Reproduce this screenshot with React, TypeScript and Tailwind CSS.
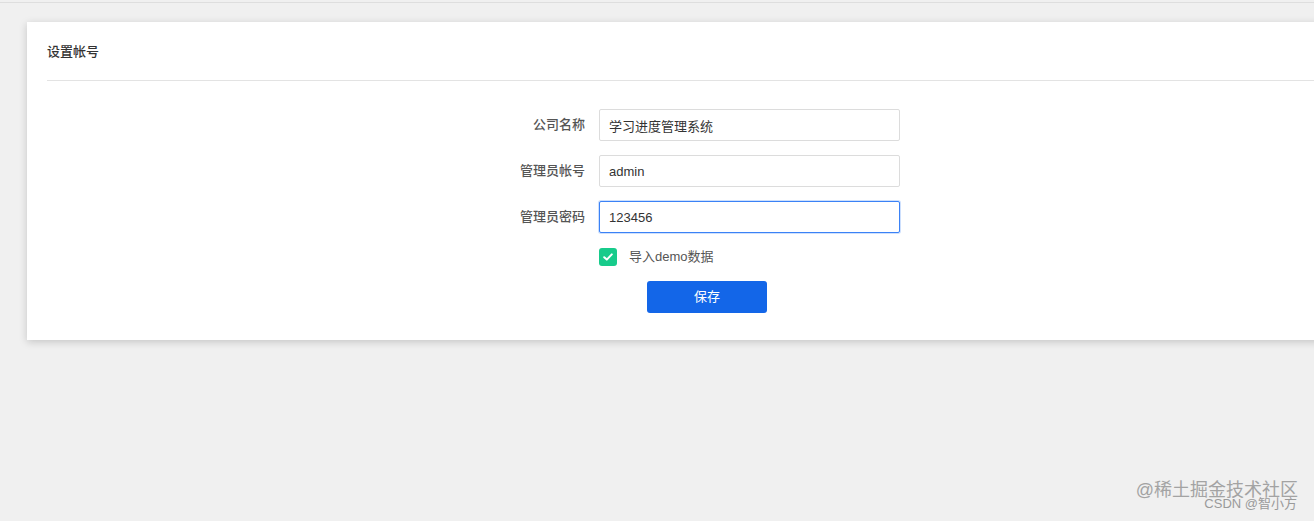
import { useState } from "react";

const font = { fontFamily: '"Liberation Sans", "Noto Sans CJK SC", sans-serif' };

function Field({
  label,
  value,
  focused,
  onChange,
}: {
  label: string;
  value: string;
  focused?: boolean;
  onChange: (v: string) => void;
}) {
  return (
    <div className="flex items-center">
      <label className="w-[552px] pr-[14px] text-right text-[13px] font-medium text-[#555]">{label}</label>
      <input
        value={value}
        onChange={(e) => onChange(e.target.value)}
        className={`h-[32px] w-[301px] rounded-[2px] border bg-white px-[9px] text-[13px] text-[#333] outline-none ${
          focused ? "border-[#3b82f6] shadow-[0_0_0_1px_rgba(59,130,246,0.25)]" : "border-[#dcdcdc]"
        }`}
      />
    </div>
  );
}

export default function App() {
  const [company, setCompany] = useState("学习进度管理系统");
  const [account, setAccount] = useState("admin");
  const [password, setPassword] = useState("123456");
  const [demo, setDemo] = useState(true);

  return (
    <div className="relative h-[521px] overflow-hidden bg-[#f0f0f0]" style={font}>
      <div className="mt-[2px] h-px bg-[#dedede]" />
      <div className="ml-[27px] mt-[19px] w-[1320px] bg-white px-[20px] pb-[27px] shadow-[0_2px_8px_rgba(0,0,0,0.18)]">
        <div className="flex h-[59px] items-center border-b border-[#e3e3e3] pt-[1px] text-[13px] font-medium text-[#333]">
          设置帐号
        </div>
        <div className="mt-[28px] flex flex-col gap-[14px]">
          <Field label="公司名称" value={company} onChange={setCompany} />
          <Field label="管理员帐号" value={account} onChange={setAccount} />
          <Field label="管理员密码" value={password} focused onChange={setPassword} />
        </div>
        <div className="ml-[552px] mt-[14px] flex items-center">
          <button
            type="button"
            onClick={() => setDemo(!demo)}
            className={`grid h-[18px] w-[18px] place-items-center rounded-[3px] ${demo ? "bg-[#17cb8b]" : "border border-[#ccc] bg-white"}`}
          >
            {demo && (
              <svg width="12" height="12" viewBox="0 0 12 12" fill="none">
                <path d="M2.2 6.2 4.8 8.6 9.8 3.4" stroke="white" strokeWidth="2" strokeLinecap="round" strokeLinejoin="round" />
              </svg>
            )}
          </button>
          <span className="ml-[12px] text-[13px] text-[#555]">导入demo数据</span>
        </div>
        <div className="ml-[600px] mt-[14px]">
          <button type="button" className="h-[32px] w-[120px] rounded-[3px] bg-[#1366e8] text-[13px] text-white">
            保存
          </button>
        </div>
      </div>
      <div className="absolute right-[16px] top-[481px] text-[18px] leading-none text-[#a3a3a3]">@稀土掘金技术社区</div>
      <div className="absolute right-[17px] top-[497px] text-[13px] leading-none text-[#9a9a9a]">CSDN @智小方</div>
    </div>
  );
}
